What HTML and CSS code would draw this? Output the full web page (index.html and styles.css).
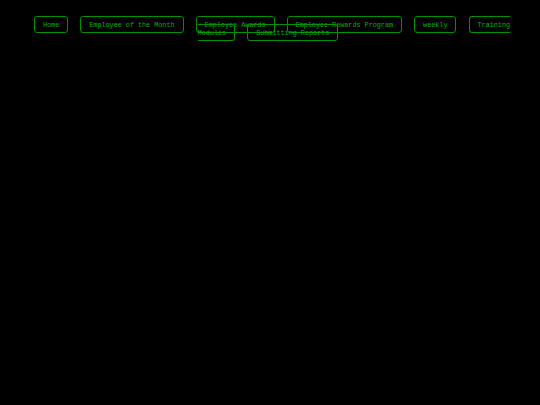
FILE: index.html
```html
<!DOCTYPE html>
<html>
<head>
<meta charset="utf-8">
<link rel="stylesheet" href="styles.css">
</head>
<body>
<nav class="nav">
  <a class="nav-link" href="#">Home</a>
  <a class="nav-link" href="#">Employee of the Month</a>
  <a class="nav-link" href="#">Employee Awards</a>
  <a class="nav-link" href="#">Employee Rewards Program</a>
  <a class="nav-link" href="#">weekly</a>
  <a class="nav-link" href="#">Training Modules</a>
  <a class="nav-link" href="#">Submitting Reports</a>
</nav>
</body>
</html>
```

FILE: styles.css
```css
html {
  background: #000;
}
body {
  margin: 8px;
  font-family: "Liberation Mono", "Courier New", monospace;
}
.nav {
  width: 490px;
  margin: 0 auto;
  padding: 12px 0 12px;
  text-align: center;
  font-size: 6.77px;
  line-height: normal;
}
.nav-link {
  color: #00b400;
  text-decoration: none;
  border: 1px solid #009000;
  border-radius: 3px;
  padding: 3.5px 8px;
  margin: 0 4px;
}
```
